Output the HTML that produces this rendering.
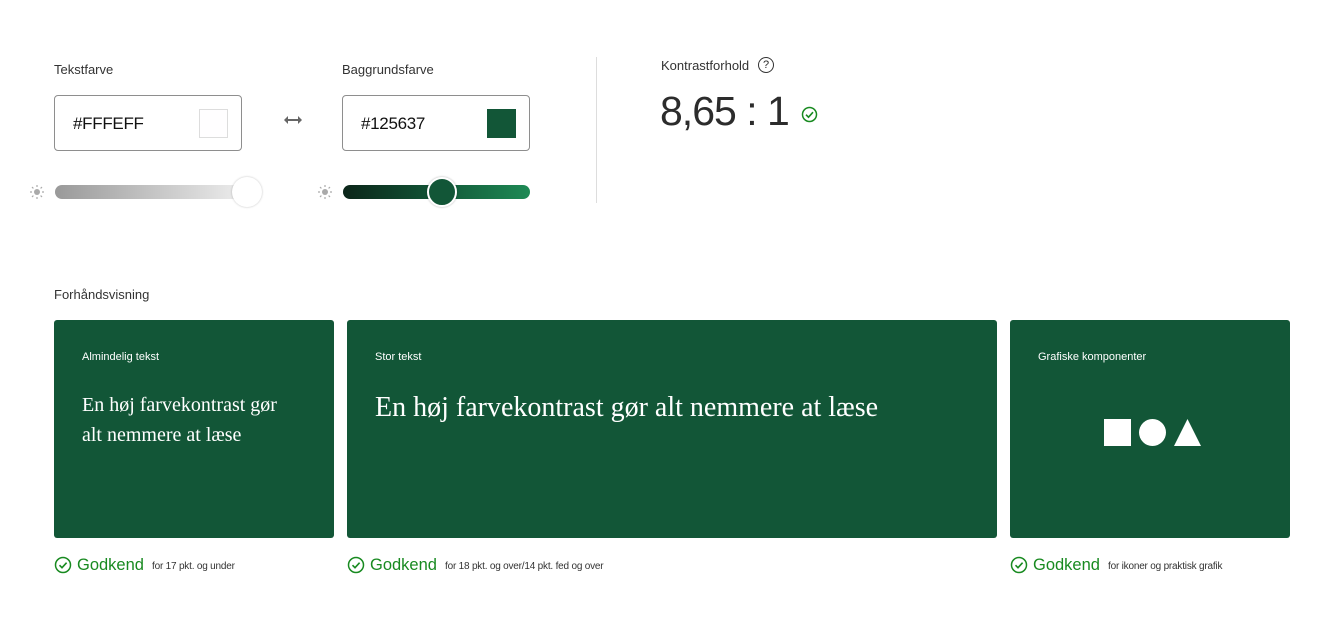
<!DOCTYPE html>
<html><head><meta charset="utf-8"><style>
*{margin:0;padding:0;box-sizing:border-box}
body{width:1333px;height:639px;background:#fff;font-family:"Liberation Sans",sans-serif;position:relative;overflow:hidden;color:#2c2c2c}
.a{position:absolute}
.lbl{font-size:13px;color:#333}
.box{border:1px solid #8e8e8e;border-radius:4px;width:188px;height:56px;background:#fff}
.box span{position:absolute;left:18px;top:18px;font-size:17px;color:#111;letter-spacing:-0.3px}
.sw{position:absolute;right:13px;top:13px;width:29px;height:29px}
.card{background:#125637;border-radius:3px;color:#fff}
.card .t{position:absolute;left:28px;top:31px;font-size:11px}
.serif{font-family:"Liberation Serif",serif}
.ok{font-size:16.5px;color:#188a20}
.small{font-size:10px;color:#333;letter-spacing:-0.2px}
</style></head><body>
<div class="a lbl" style="left:54px;top:62px">Tekstfarve</div>
<div class="a lbl" style="left:342px;top:62px">Baggrundsfarve</div>
<div class="a box" style="left:54px;top:95px"><span>#FFFEFF</span><div class="sw" style="border:1px solid #ddd;background:#fffeff"></div></div>
<div class="a box" style="left:342px;top:95px"><span>#125637</span><div class="sw" style="background:#125637"></div></div>
<svg class="a" style="left:284px;top:115px" width="18" height="10"><path d="M3 5h12" stroke="#666" stroke-width="2"/><path d="M0 5l4-4v8zM18 5l-4-4v8z" fill="#666"/></svg>
<svg class="a" style="left:29px;top:184px" width="16" height="16"><circle cx="8" cy="8" r="3" fill="#aaa"/><g stroke="#aaa" stroke-width="1.2"><path d="M8 1v2M8 13v2M1 8h2M13 8h2M3 3l1.4 1.4M11.6 11.6L13 13M3 13l1.4-1.4M11.6 4.4L13 3"/></g></svg>
<svg class="a" style="left:317px;top:184px" width="16" height="16"><circle cx="8" cy="8" r="3" fill="#aaa"/><g stroke="#aaa" stroke-width="1.2"><path d="M8 1v2M8 13v2M1 8h2M13 8h2M3 3l1.4 1.4M11.6 11.6L13 13M3 13l1.4-1.4M11.6 4.4L13 3"/></g></svg>
<div class="a" style="left:55px;top:185px;width:205px;height:14px;border-radius:7px;background:linear-gradient(90deg,#999,#f4f4f4)"></div>
<div class="a" style="left:232px;top:177px;width:30px;height:30px;border-radius:50%;background:#fff;box-shadow:0 0 2px rgba(0,0,0,.25)"></div>
<div class="a" style="left:343px;top:185px;width:187px;height:14px;border-radius:7px;background:linear-gradient(90deg,#0b2519,#125637 50%,#1e8a55)"></div>
<div class="a" style="left:427px;top:177px;width:30px;height:30px;border-radius:50%;background:#125637;border:2px solid #fff;box-shadow:0 0 2px rgba(0,0,0,.3)"></div>
<div class="a" style="left:596px;top:57px;width:1px;height:146px;background:#ddd"></div>
<div class="a lbl" style="left:661px;top:58px">Kontrastforhold</div>
<div class="a" style="left:758px;top:57px;width:16px;height:16px;border:1.3px solid #333;border-radius:50%;font-size:11px;text-align:center;line-height:14px">?</div>
<div class="a" style="left:660px;top:88px;font-size:41px;color:#2c2c2c;letter-spacing:-1px">8,65 : 1</div>
<svg class="a" style="left:801px;top:106px" width="17" height="17"><circle cx="8.5" cy="8.5" r="7" fill="none" stroke="#188a20" stroke-width="1.5"/><path d="M5 8.7l2.5 2.5 4.5-5" fill="none" stroke="#188a20" stroke-width="1.6"/></svg>
<div class="a lbl" style="left:54px;top:287px">Forhåndsvisning</div>
<div class="a card" style="left:54px;top:320px;width:280px;height:218px"><div class="t">Almindelig tekst</div><div class="a serif" style="left:28px;top:70px;font-size:20px;line-height:30px">En høj farvekontrast gør<br>alt nemmere at læse</div></div>
<div class="a card" style="left:347px;top:320px;width:650px;height:218px"><div class="t">Stor tekst</div><div class="a serif" style="left:28px;top:72px;font-size:28px">En høj farvekontrast gør alt nemmere at læse</div></div>
<div class="a card" style="left:1010px;top:320px;width:280px;height:218px"><div class="t">Grafiske komponenter</div>
<div class="a" style="left:94px;top:99px;width:27px;height:27px;background:#fff"></div>
<div class="a" style="left:129px;top:99px;width:27px;height:27px;background:#fff;border-radius:50%"></div>
<svg class="a" style="left:164px;top:99px" width="27" height="27"><path d="M13.5 0L27 27H0z" fill="#fff"/></svg></div>
<svg class="a" style="left:54px;top:556px" width="18" height="18"><circle cx="9" cy="9" r="7.5" fill="none" stroke="#188a20" stroke-width="1.5"/><path d="M5.5 9.2l2.5 2.5 4.6-5" fill="none" stroke="#188a20" stroke-width="1.6"/></svg>
<div class="a ok" style="left:77px;top:556px">Godkend</div><div class="a small" style="left:152px;top:561px">for 17 pkt. og under</div>
<svg class="a" style="left:347px;top:556px" width="18" height="18"><circle cx="9" cy="9" r="7.5" fill="none" stroke="#188a20" stroke-width="1.5"/><path d="M5.5 9.2l2.5 2.5 4.6-5" fill="none" stroke="#188a20" stroke-width="1.6"/></svg>
<div class="a ok" style="left:370px;top:556px">Godkend</div><div class="a small" style="left:445px;top:561px">for 18 pkt. og over/14 pkt. fed og over</div>
<svg class="a" style="left:1010px;top:556px" width="18" height="18"><circle cx="9" cy="9" r="7.5" fill="none" stroke="#188a20" stroke-width="1.5"/><path d="M5.5 9.2l2.5 2.5 4.6-5" fill="none" stroke="#188a20" stroke-width="1.6"/></svg>
<div class="a ok" style="left:1033px;top:556px">Godkend</div><div class="a small" style="left:1108px;top:561px">for ikoner og praktisk grafik</div>
</body></html>
